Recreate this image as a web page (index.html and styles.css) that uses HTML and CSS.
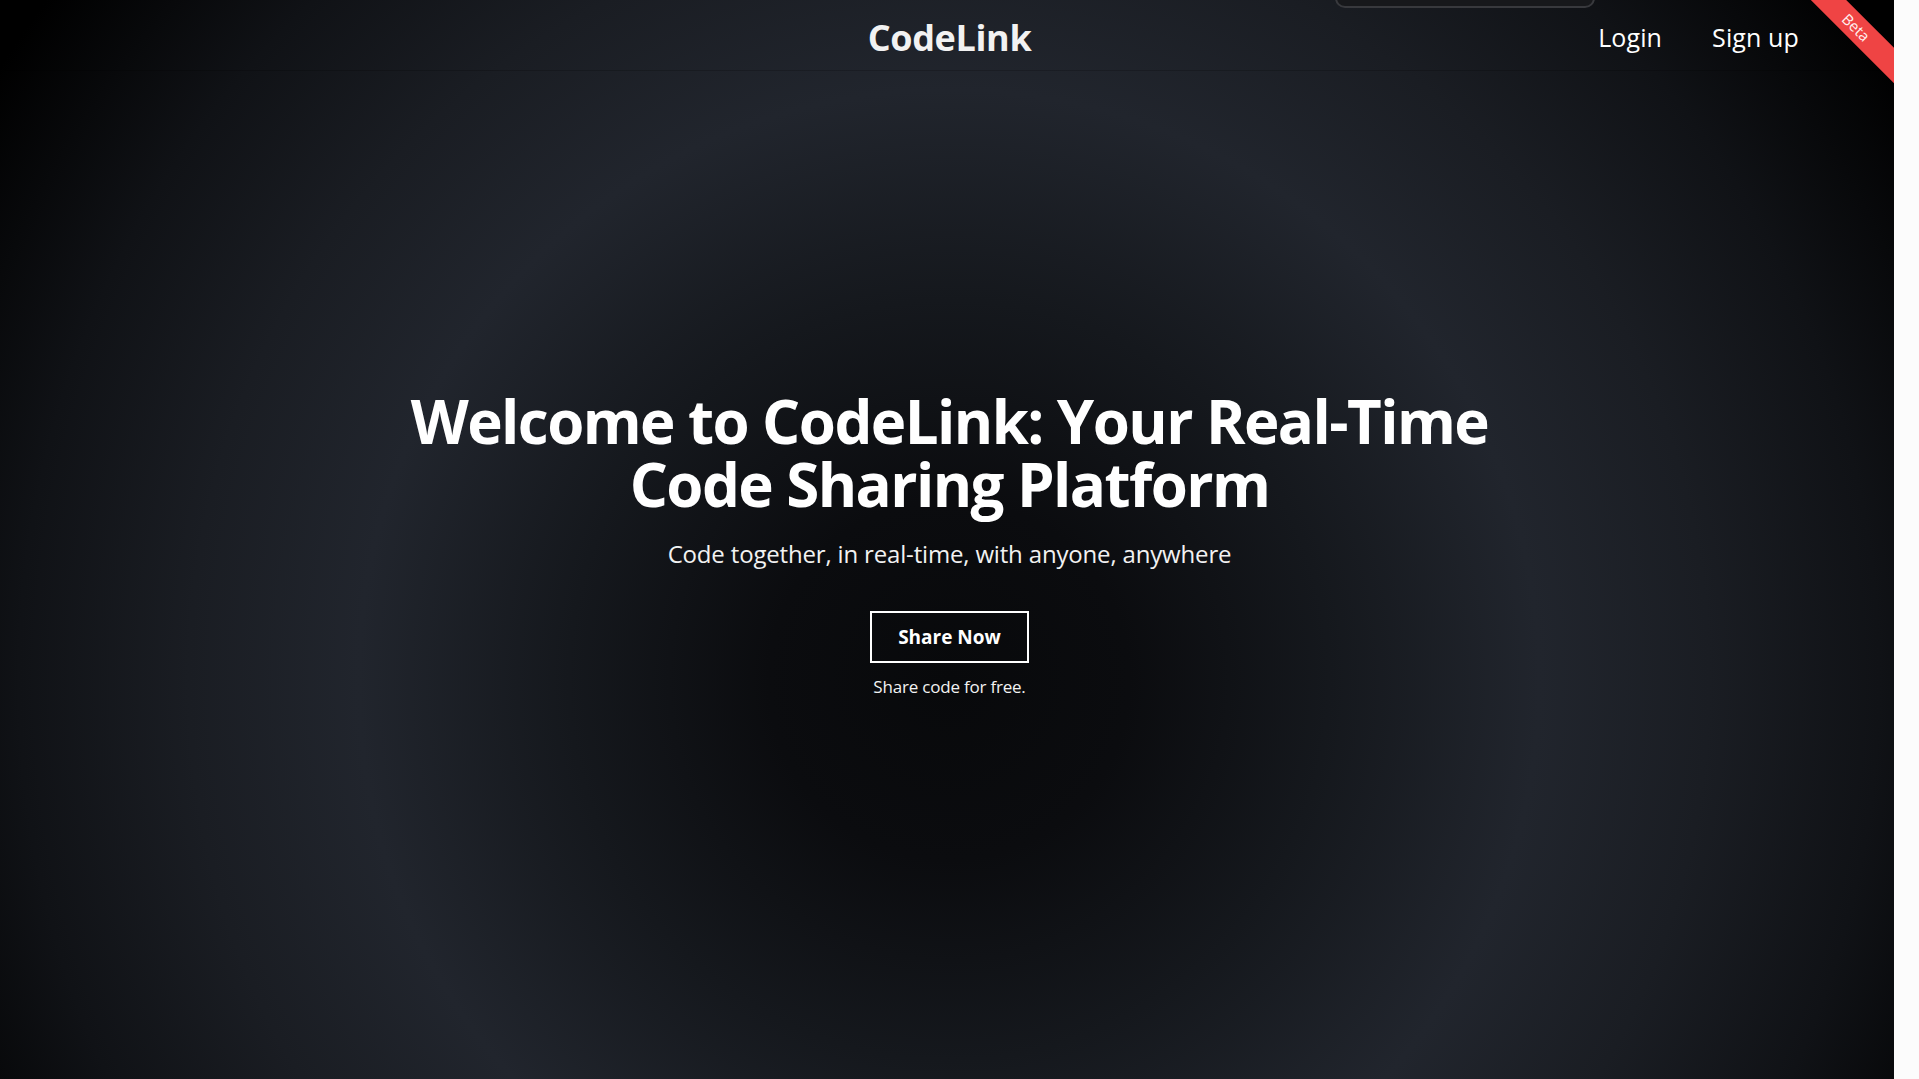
FILE: index.html
```html
<!DOCTYPE html>
<html lang="en">
<head>
<meta charset="utf-8">
<title>CodeLink</title>
<link rel="stylesheet" href="styles.css">
</head>
<body>
<div class="page">
  <div class="toast"></div>
  <div class="ribbon-wrap"><div class="ribbon">Beta</div></div>
  <header class="header">
    <div class="header-side"></div>
    <div class="logo">CodeLink</div>
    <nav class="nav">
      <a class="nav-link" href="#">Login</a>
      <a class="nav-link" href="#">Sign up</a>
    </nav>
  </header>
  <main class="hero">
    <h1 class="hero-title">Welcome to CodeLink: Your Real-Time<br>Code Sharing Platform</h1>
    <p class="hero-sub">Code together, in real-time, with anyone, anywhere</p>
    <a class="share-btn" href="#">Share Now</a>
    <p class="hero-note">Share code for free.</p>
  </main>
</div>
<div class="scroll-track"></div>
</body>
</html>
```

FILE: styles.css
```css
* { box-sizing: border-box; }
html, body { margin: 0; padding: 0; }
body {
  display: flex;
  width: 1919px;
  height: 1079px;
  overflow: hidden;
  font-family: "Open Sans", "Noto Sans", sans-serif;
  color: #f5f5f5;
  background: #fcfcfc;
}
.page {
  position: relative;
  flex: 0 0 1894px;
  height: 1079px;
  overflow: hidden;
  padding-left: 5px;
  background: radial-gradient(circle at 949px 680px,
    #08090b 0px,
    #0b0c0f 180px,
    #15181d 380px,
    #21252d 590px,
    #1a1d23 760px,
    #101216 930px,
    #000000 1130px);
}
.scroll-track {
  flex: 0 0 25px;
  height: 1079px;
  background: #fcfcfc;
}
.toast {
  position: absolute;
  left: 1335px;
  top: -52px;
  width: 260px;
  height: 60px;
  border: 2px solid #38393d;
  border-radius: 10px;
  background: #17181b;
}
.ribbon-wrap {
  position: absolute;
  top: 0;
  right: 0;
  width: 110px;
  height: 110px;
  overflow: hidden;
}
.ribbon {
  position: absolute;
  width: 170px;
  height: 25px;
  left: -13px;
  top: 15px;
  transform: rotate(45deg);
  background: #ef4444;
  color: #fff1f1;
  font-size: 15px;
  line-height: 25px;
  text-align: center;
}
.header {
  display: grid;
  grid-template-columns: 1fr auto 1fr;
  align-items: center;
  height: 71px;
  border-bottom: 1px solid rgba(0, 0, 0, 0.18);
}
.logo {
  font-size: 36px;
  font-weight: 700;
  line-height: 70px;
  padding-top: 3px;
  color: #f2f2f2;
  letter-spacing: -0.01em;
}
.nav {
  justify-self: end;
  display: flex;
  gap: 50px;
  padding-right: 95px;
  padding-top: 0;
}
.nav-link {
  color: #ffffff;
  text-decoration: none;
  font-size: 25px;
  font-weight: 500;
  line-height: 70px;
  letter-spacing: 0.005em;
}
.hero {
  display: flex;
  flex-direction: column;
  align-items: center;
  text-align: center;
  padding-top: 319px;
}
.hero-title {
  margin: 0;
  font-size: 60px;
  line-height: 63px;
  font-weight: 700;
  color: #ffffff;
  letter-spacing: -0.026em;
}
.hero-sub {
  margin: 22px 0 0;
  font-size: 24px;
  line-height: 32px;
  color: #f2f2f2;
  letter-spacing: -0.007em;
}
.share-btn {
  margin-top: 41px;
  display: block;
  width: 159px;
  height: 52px;
  padding: 12px 0;
  border: 2px solid #ffffff;
  color: #ffffff;
  text-decoration: none;
  font-size: 19px;
  line-height: 24px;
  font-weight: 700;
  letter-spacing: 0;
}
.hero-note {
  margin: 12px 0 0;
  font-size: 17px;
  line-height: 24px;
  color: #f2f2f2;
  letter-spacing: -0.012em;
}
```
